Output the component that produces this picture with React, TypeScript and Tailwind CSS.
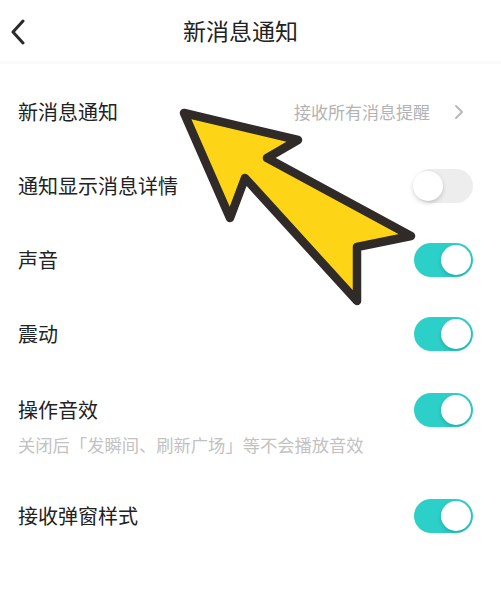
import React from "react";

type ToggleProps = { on: boolean };

function Toggle({ on }: ToggleProps) {
  return (
    <div
      className={`relative h-[34px] w-[59px] shrink-0 rounded-full ${
        on ? "bg-[#2dd0c8]" : "bg-[#ededed]"
      }`}
    >
      <div
        className={`absolute top-[2px] h-[30px] w-[30px] rounded-full bg-white shadow-[0_2px_4px_rgba(0,0,0,0.18)] ${
          on ? "right-[2px]" : "left-[-1px]"
        }`}
      />
    </div>
  );
}

function Row({ label, on }: { label: string; on: boolean }) {
  return (
    <div className="flex h-[74px] items-center justify-between pl-[18px] pr-[28px]">
      <span className="text-[20px] text-[#222]">{label}</span>
      <Toggle on={on} />
    </div>
  );
}

function Arrow() {
  return (
    <svg
      className="pointer-events-none absolute left-0 top-0"
      width="501"
      height="615"
      viewBox="0 0 501 615"
    >
      <polygon
        points="184,113 298,140 267,158 411,236 357,247 357,301 245,178 230,218"
        fill="#fdd516"
        stroke="#302b29"
        strokeWidth="8.5"
        strokeLinejoin="round"
      />
    </svg>
  );
}

export default function App() {
  return (
    <div
      className="relative h-[615px] w-[501px] overflow-hidden bg-white"
      style={{ fontFamily: '"Noto Sans CJK SC", "Noto Sans", sans-serif' }}
    >
      <div className="relative flex h-[64px] items-center justify-center border-b-[3px] border-[#fafafa] pr-[20px]">
        <svg
          className="absolute left-[9px] top-[19px]"
          width="18"
          height="26"
          viewBox="0 0 18 26"
        >
          <polyline
            points="14,2 4,13 14,24"
            fill="none"
            stroke="#2a2a2a"
            strokeWidth="3"
            strokeLinecap="round"
            strokeLinejoin="round"
          />
        </svg>
        <span className="text-[23px] text-[#222]">新消息通知</span>
      </div>

      <div className="pt-[11px]">
        <div className="flex h-[74px] items-center justify-between pl-[18px] pr-[37px]">
          <span className="text-[20px] text-[#222]">新消息通知</span>
          <div className="flex items-center gap-[24px]">
            <span className="text-[17px] text-[#b3b3b3]">接收所有消息提醒</span>
            <svg width="10" height="16" viewBox="0 0 10 16">
              <polyline
                points="2,2 8,8 2,14"
                fill="none"
                stroke="#b8b8b8"
                strokeWidth="2"
                strokeLinecap="round"
                strokeLinejoin="round"
              />
            </svg>
          </div>
        </div>
        <Row label="通知显示消息详情" on={false} />
        <Row label="声音" on={true} />
        <Row label="震动" on={true} />

        <div className="pb-[24px] pt-[22px]">
          <div className="flex h-[34px] items-center justify-between pl-[18px] pr-[28px]">
            <span className="text-[20px] text-[#222]">操作音效</span>
            <Toggle on={true} />
          </div>
          <div className="mt-[8px] pl-[18px] text-[17.3px] leading-[20px] text-[#c2c2c2]">
            关闭后「发瞬间、刷新广场」等不会播放音效
          </div>
        </div>

        <Row label="接收弹窗样式" on={true} />
      </div>

      <Arrow />
    </div>
  );
}
